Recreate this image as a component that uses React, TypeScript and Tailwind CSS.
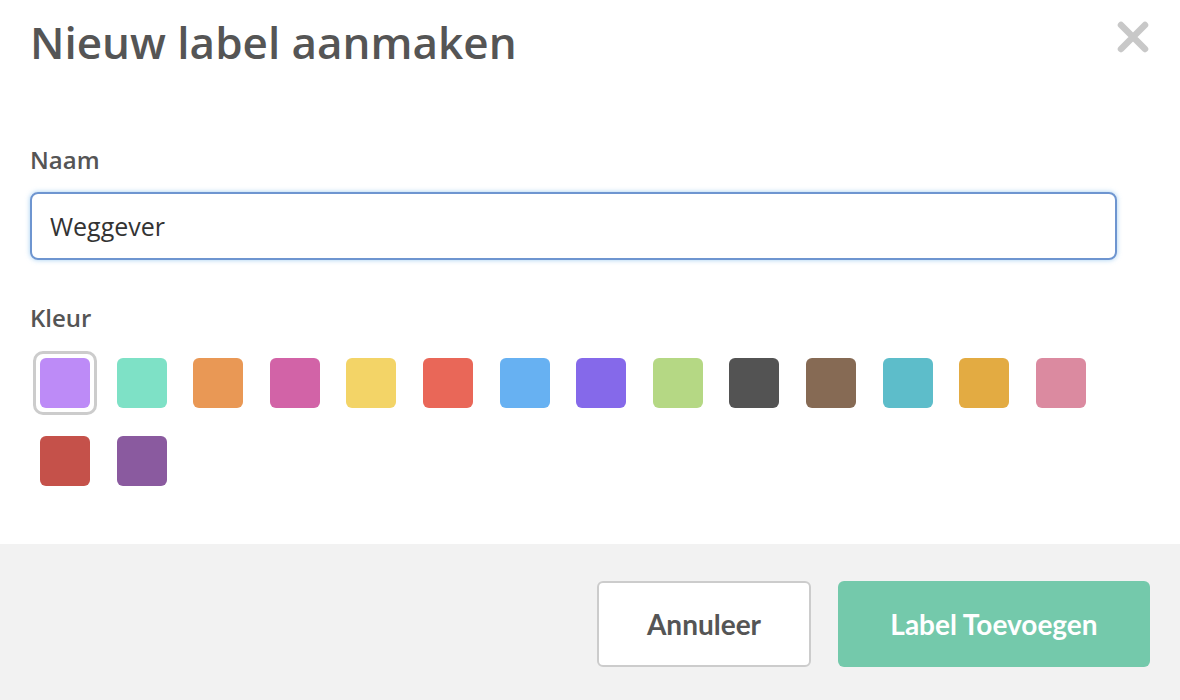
import React, { useState } from 'react'

const colors = [
  '#bd8bf7',
  '#7ee1c6',
  '#e99855',
  '#d263a7',
  '#f3d467',
  '#e96758',
  '#67b1f2',
  '#8569ea',
  '#b5d884',
  '#535353',
  '#866a54',
  '#5dbdca',
  '#e3ab42',
  '#db8aa0',
  '#c5514a',
  '#8a5a9f',
]

export default function App() {
  const [name, setName] = useState('Weggever')
  const [selected, setSelected] = useState(0)

  return (
    <div
      className="w-[1180px] h-[700px] flex flex-col bg-white overflow-hidden"
      style={{ fontFamily: '"Open Sans", sans-serif' }}
    >
      <div className="flex-1 px-[30px]">
        <div className="flex items-start justify-between pt-[10px]">
          <h2 className="text-[44px] leading-[64px] font-semibold text-[#555]">Nieuw label aanmaken</h2>
          <button type="button" className="mt-[10px] mr-0 text-[#c8c8c8]" aria-label="sluiten">
            <svg width="34" height="34" viewBox="0 0 34 34">
              <path d="M5 5 L29 29 M29 5 L5 29" stroke="currentColor" strokeWidth="6.5" strokeLinecap="round" />
            </svg>
          </button>
        </div>

        <label className="block mt-[70px] text-[24px] leading-[32px] font-semibold text-[#555]">Naam</label>
        <input
          type="text"
          value={name}
          autoFocus
          onChange={(e) => setName(e.target.value)}
          className="mt-[16px] block w-[1087px] h-[68px] px-[18px] rounded-[8px] border-2 border-[#6e95d0] text-[25px] text-[#333] caret-[#333] outline-none shadow-[0_0_5px_rgba(102,175,233,0.6)]"
        />

        <label className="block mt-[42px] text-[24px] leading-[32px] font-semibold text-[#555]">Kleur</label>
        <div className="mt-[17px] ml-[3px] flex flex-wrap w-[1080px] gap-x-[12.6px] gap-y-[14px]">
          {colors.map((c, i) => (
            <button
              key={c}
              type="button"
              onClick={() => setSelected(i)}
              className={
                'w-[64px] h-[64px] p-[4px] rounded-[10px] border-[3px] ' +
                (i === selected ? 'border-[#cccccc]' : 'border-transparent')
              }
            >
              <span className="block w-full h-full rounded-[6px]" style={{ backgroundColor: c }} />
            </button>
          ))}
        </div>
      </div>

      <div className="h-[156px] bg-[#f2f2f2] flex items-center justify-end gap-[27px] pr-[30px] pt-[4px]">
        <button
          type="button"
          className="w-[214px] h-[86px] bg-white border-2 border-[#cccccc] rounded-[6px] text-[28px] font-bold text-[#555]"
          style={{ fontFamily: 'Lato, sans-serif' }}
        >
          Annuleer
        </button>
        <button
          type="button"
          className="w-[312px] h-[86px] bg-[#74c9ab] rounded-[6px] text-[28px] font-bold text-white"
          style={{ fontFamily: 'Lato, sans-serif' }}
        >
          Label Toevoegen
        </button>
      </div>
    </div>
  )
}
